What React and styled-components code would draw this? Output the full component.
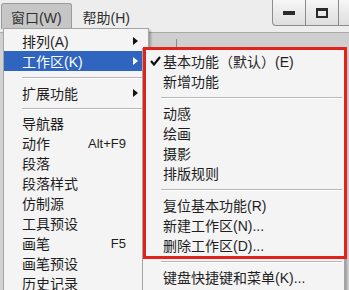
import React from 'react';
import styled, { createGlobalStyle } from 'styled-components';

const GlobalStyle = createGlobalStyle`
  body {
    margin: 0;
    background: #d6d6d6;
    font-family: "Liberation Sans", "Noto Sans CJK SC", sans-serif;
  }
`

const Screen = styled.div`
  position: relative;
  width: 349px;
  height: 290px;
  overflow: hidden;
  background: #d2d2d2;
`

const MenuBar = styled.div`
  display: flex;
  align-items: flex-start;
  height: 33px;
  padding-left: 1px;
  background: #ededed;
  border-bottom: 1px solid #a9a9a9;
  box-sizing: border-box;
`

const MenuTitle = styled.div`
  height: 25px;
  margin-top: 3px;
  padding: 0 ${p => (p.active ? '9px' : '8px')};
  display: flex;
  align-items: center;
  font-size: 14px;
  color: #303030;
  background: ${p => (p.active ? '#c6c6c6' : 'transparent')};
  border: 1px solid ${p => (p.active ? '#9a9a9a' : 'transparent')};
  border-bottom: none;
  border-radius: 3px 3px 0 0;
  margin-right: ${p => (p.active ? '2px' : '0')};
`

const WindowButtons = styled.div`
  margin-left: auto;
  display: flex;
  margin-right: -23px;
`

const WinButton = styled.div`
  width: 32px;
  height: 25px;
  border: 1px solid #8c8c8c;
  border-top: none;
  border-left: ${p => (p.first ? '1px solid #8c8c8c' : 'none')};
  border-radius: 0 0 ${p => (p.first ? '0 4px' : '0 0')};
  background: linear-gradient(#f6f6f6, #dedede);
  display: flex;
  align-items: center;
  justify-content: center;
`

const Toolbar = styled.div`
  height: 14px;
  background: #cfcfcf;
  display: flex;
  padding-left: 176px;
  &::before {
    content: '';
    width: 1px;
    height: 8px;
    margin-top: 6px;
    background: #8a8a8a;
  }
`

const Menu = styled.div`
  position: absolute;
  left: ${p => p.left}px;
  top: ${p => p.top}px;
  width: ${p => p.width}px;
  padding: ${p => p.pad}px 0 4px;
  background: #f4f4f4;
  border: 1px solid #a4a4a4;
  box-shadow: 2px 2px 2px rgba(0, 0, 0, 0.25);
  box-sizing: border-box;
  font-size: 14px;
  color: #1e1e1e;
`

const Row = styled.div`
  position: relative;
  display: flex;
  align-items: center;
  height: ${p => p.h || 20}px;
  padding: 0 8px 0 ${p => p.indent}px;
  background: ${p => (p.hot ? '#2f64bf' : 'transparent')};
  color: ${p => (p.hot ? '#fff' : '#1e1e1e')};
  white-space: nowrap;
`

const Shortcut = styled.span`
  margin-left: auto;
  margin-right: 14px;
  font-size: 13px;
`

const Arrow = styled.svg`
  margin-left: auto;
  margin-right: 2px;
`

const Check = styled.svg`
  position: absolute;
  left: 7px;
  top: 5px;
`

const Separator = styled.div`
  height: ${p => p.h || 12}px;
  display: flex;
  align-items: center;
  padding: 0 2px 0 ${p => p.indent}px;
  &::after {
    content: '';
    flex: 1;
    height: 1px;
    background: #b8b8b8;
    box-shadow: 0 1px 0 #fff;
  }
`

const Highlight = styled.div`
  position: absolute;
  left: 143px;
  top: 47px;
  width: 204px;
  height: 212px;
  border: 3px solid #e2231d;
  box-sizing: border-box;
  pointer-events: none;
`

const RightArrow = ({ color }) => (
  <Arrow width="5" height="8" viewBox="0 0 5 8">
    <path d="M0 0 L5 4 L0 8 Z" fill={color} />
  </Arrow>
)

const mainItems = [
  { label: '排列(A)', sub: true },
  { label: '工作区(K)', sub: true, hot: true },
  { sep: true, h: 12 },
  { label: '扩展功能', sub: true },
  { sep: true, h: 10 },
  { label: '导航器' },
  { label: '动作', key: 'Alt+F9' },
  { label: '段落' },
  { label: '段落样式' },
  { label: '仿制源' },
  { label: '工具预设' },
  { label: '画笔', key: 'F5' },
  { label: '画笔预设' },
  { label: '历史记录' },
]

const subItems = [
  { label: '基本功能（默认）(E)', checked: true },
  { label: '新增功能' },
  { sep: true },
  { label: '动感' },
  { label: '绘画' },
  { label: '摄影' },
  { label: '排版规则' },
  { sep: true },
  { label: '复位基本功能(R)' },
  { label: '新建工作区(N)...' },
  { label: '删除工作区(D)...' },
  { sep: true },
  { label: '键盘快捷键和菜单(K)...' },
]

const App = () => {
  return (
    <Screen>
      <GlobalStyle />
      <MenuBar>
        <MenuTitle active>窗口(W)</MenuTitle>
        <MenuTitle>帮助(H)</MenuTitle>
        <WindowButtons>
          <WinButton first>
            <svg width="12" height="4" viewBox="0 0 12 4">
              <rect x="0" y="0" width="12" height="4" fill="#2a2a2a" />
            </svg>
          </WinButton>
          <WinButton>
            <svg width="12" height="10" viewBox="0 0 12 10">
              <rect x="1" y="1" width="10" height="8" fill="none" stroke="#2a2a2a" strokeWidth="2" />
              <rect x="0" y="0" width="12" height="3" fill="#2a2a2a" />
            </svg>
          </WinButton>
          <WinButton />
        </WindowButtons>
      </MenuBar>
      <Toolbar />

      <Menu left={3} top={28} width={146} pad={2}>
        {mainItems.map((it, i) =>
          it.sep ? (
            <Separator key={i} indent={18} h={it.h} />
          ) : (
            <Row key={i} indent={18} hot={it.hot}>
              {it.label}
              {it.key && <Shortcut>{it.key}</Shortcut>}
              {it.sub && <RightArrow color={it.hot ? '#fff' : '#111'} />}
            </Row>
          )
        )}
      </Menu>

      <Menu left={142} top={48} width={203} pad={2}>
        {subItems.map((it, i) =>
          it.sep ? (
            <Separator key={i} indent={18} />
          ) : (
            <Row key={i} indent={20}>
              {it.checked && (
                <Check width="11" height="10" viewBox="0 0 11 10">
                  <path d="M1 5 L4 8.5 L10 1" fill="none" stroke="#111" strokeWidth="2.2" />
                </Check>
              )}
              {it.label}
            </Row>
          )
        )}
      </Menu>

      <Highlight />
    </Screen>
  );
};

export default App;
